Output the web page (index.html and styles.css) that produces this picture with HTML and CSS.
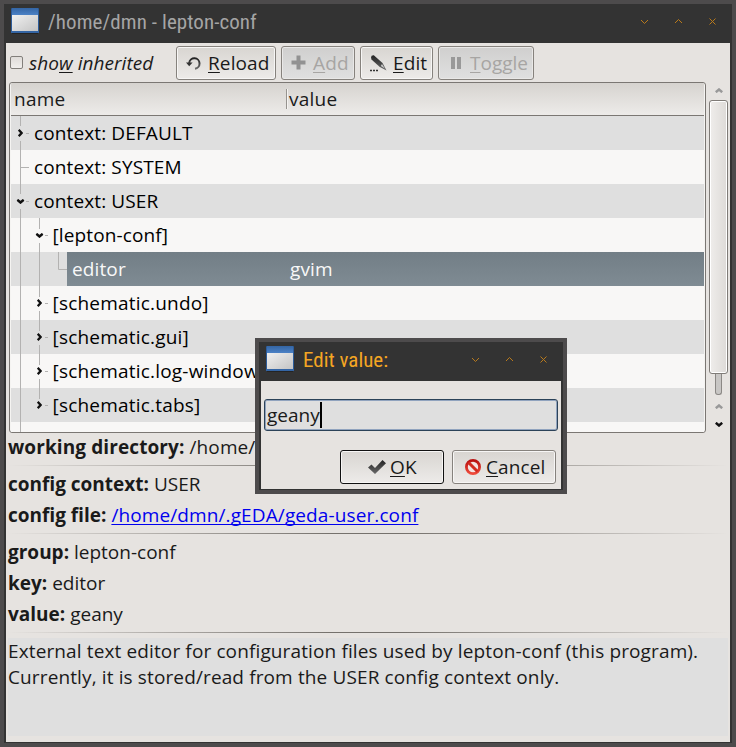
FILE: index.html
```html
<!DOCTYPE html>
<html lang="en">
<head>
<meta charset="utf-8">
<title>/home/dmn - lepton-conf</title>
<link rel="stylesheet" href="styles.css">
</head>
<body>
<svg class="defs" aria-hidden="true">
  <defs>
    <linearGradient id="blue" x1="0" y1="0" x2="0" y2="1"><stop offset="0" stop-color="#3465a4"/><stop offset="1" stop-color="#4c82c6"/></linearGradient>
    <linearGradient id="pane" x1="0" y1="0" x2="1" y2="1"><stop offset="0" stop-color="#f0f0f0"/><stop offset="1" stop-color="#c4c4c4"/></linearGradient>
    <linearGradient id="dark" x1="0" y1="0" x2="0" y2="1"><stop offset="0" stop-color="#222"/><stop offset="1" stop-color="#6a6a6a"/></linearGradient>
    <linearGradient id="red" x1="0" y1="0" x2="0" y2="1"><stop offset="0" stop-color="#b81010"/><stop offset="1" stop-color="#ee4a3a"/></linearGradient>
    <symbol id="app" viewBox="0 0 28 26">
      <rect y="0" width="28" height="25" rx="1" fill="#2d5c99"/>
      <rect x="1" y="0" width="26" height="7" fill="url(#blue)"/>
      <rect x="1" y="7" width="26" height="16" fill="url(#pane)"/>
      <rect x="0" y="23" width="28" height="2" fill="#3465a4"/>
      <rect x="1" y="25" width="26" height="1" fill="#242424"/>
    </symbol>
    <symbol id="min" viewBox="0 0 7 7"><path d="M0 2l3.5 3.5L7 2" fill="none" stroke="currentColor"/></symbol>
    <symbol id="max" viewBox="0 0 7 7"><path d="M0 5l3.5-3.5L7 5" fill="none" stroke="currentColor"/></symbol>
    <symbol id="close" viewBox="0 0 7 7"><path d="M.5.5l6 6m0-6l-6 6" fill="none" stroke="currentColor"/></symbol>
    <symbol id="right" viewBox="0 0 5 8"><path d="M.7.8L3.6 4 .7 7.2" fill="none" stroke="#111" stroke-width="2.3"/></symbol>
    <symbol id="down" viewBox="0 0 8 5"><path d="M.8.8L4 3.5 7.2.8" fill="none" stroke="currentColor" stroke-width="2.5"/></symbol>
  </defs>
</svg>

<div class="window">
  <div class="titlebar">
    <svg class="app-icon"><use href="#app"/></svg>
    <span class="title">/home/dmn - lepton-conf</span>
    <div class="controls">
      <svg><use href="#min"/></svg><svg><use href="#max"/></svg><svg><use href="#close"/></svg>
    </div>
  </div>

  <div class="content">
    <div class="toolbar">
      <span class="checkbox"></span>
      <span class="check-label">sho<u>w</u> inherited</span>
      <div class="button reload">
        <svg class="i-reload" viewBox="0 0 16 16"><path d="M3.2 9.5V7.8A5.2 5.2 0 1 1 9 13.7" fill="none" stroke="url(#dark)" stroke-width="2"/><path d="M0 7.5h6.6L3.2 11.2z" fill="#333"/></svg>
        <span><u>R</u>eload</span>
      </div>
      <div class="button add disabled">
        <svg class="i-add" viewBox="0 0 15 15"><path d="M5.5 0.5h4v5h5v4h-5v5h-4v-5h-5v-4h5z" fill="#929292"/></svg>
        <span><u>A</u>dd</span>
      </div>
      <div class="button edit">
        <svg class="i-edit" viewBox="0 0 17 18"><path d="M1 3.5Q1 1.2 3.8 1.3L12.5 9 16.5 16.5 9.5 12.8 1.5 5.5z" fill="url(#dark)"/><path d="M12 10l2.8 4.5L10.8 12z" fill="#ccc"/><path d="M0 16.5h2m1 0h2m1 0h2" stroke="#333" stroke-width="1.5"/></svg>
        <span><u>E</u>dit</span>
      </div>
      <div class="button toggle disabled">
        <svg class="i-pause" viewBox="0 0 11 12"><path d="M0 0h4v12H0zM6 0h4v12H6z" fill="#999"/></svg>
        <span><u>T</u>oggle</span>
      </div>
    </div>

    <div class="browser">
      <div class="tree">
        <div class="header"><span class="col-name">name</span><span class="col-value">value</span></div>
        <div class="rows">
          <div class="row"><svg class="guide l0"><path class="line" d="M9.5 0v10M9.5 25v9M15 17.5h3"/><use href="#right" x="7" y="13" width="5" height="8"/></svg><span>context: DEFAULT</span></div>
          <div class="row"><svg class="guide l0"><path class="line" d="M9.5 0v34M10 17.5h8"/></svg><span>context: SYSTEM</span></div>
          <div class="row"><svg class="guide l0"><path class="line" d="M9.5 0v10M9.5 25v9M15 17.5h3"/><use href="#down" x="5.5" y="15" width="8" height="5"/></svg><span>context: USER</span></div>
          <div class="row"><svg class="guide l1"><path class="line" d="M9.5 0v34M28.5 0v11M28.5 25v9M34 17.5h3"/><use href="#down" x="24.5" y="15" width="8" height="5"/></svg><span>[lepton-conf]</span></div>
          <div class="row"><svg class="guide l2"><path class="line" d="M9.5 0v34M28.5 0v34M47.5 0v17.5h8.5"/></svg><div class="selected"><span class="sel-name">editor</span><span>gvim</span></div></div>
          <div class="row wide"><svg class="guide l1"><path class="line" d="M9.5 0v34M28.5 0v11M28.5 25v9M34 17.5h3"/><use href="#right" x="26" y="13" width="5" height="8"/></svg><span>[schematic.undo]</span></div>
          <div class="row wide"><svg class="guide l1"><path class="line" d="M9.5 0v34M28.5 0v11M28.5 25v9M34 17.5h3"/><use href="#right" x="26" y="13" width="5" height="8"/></svg><span>[schematic.gui]</span></div>
          <div class="row wide"><svg class="guide l1"><path class="line" d="M9.5 0v34M28.5 0v11M28.5 25v9M34 17.5h3"/><use href="#right" x="26" y="13" width="5" height="8"/></svg><span>[schematic.log-window</span></div>
          <div class="row wide"><svg class="guide l1"><path class="line" d="M9.5 0v34M28.5 0v11M34 17.5h3"/><use href="#right" x="26" y="13" width="5" height="8"/></svg><span>[schematic.tabs]</span></div>
          <div class="row"><svg class="guide l0"><path class="line" d="M9.5 0v34"/></svg></div>
        </div>
      </div>
      <div class="scrollbar">
        <svg class="arrow up"><use href="#down"/></svg>
        <div class="slider"></div>
        <div class="trough"></div>
        <svg class="arrow up second"><use href="#down"/></svg>
        <svg class="arrow end"><use href="#down"/></svg>
      </div>
    </div>

    <div class="info">
      <div class="field spaced"><b>working directory:</b> /home/</div>
      <div class="rule"></div>
      <div class="field"><b>config context:</b> USER</div>
      <div class="field next"><b>config file:</b> <a class="link">/home/dmn/.gEDA/geda-user.conf</a></div>
      <div class="rule"></div>
      <div class="field"><b>group:</b> lepton-conf</div>
      <div class="field next"><b>key:</b> editor</div>
      <div class="field next"><b>value:</b> geany</div>
      <div class="rule"></div>
      <div class="description">External text editor for configuration files used by lepton-conf (this program).<br>Currently, it is stored/read from the USER config context only.</div>
    </div>
  </div>
</div>

<div class="dialog">
  <div class="titlebar">
    <svg class="app-icon"><use href="#app"/></svg>
    <span class="title">Edit value:</span>
    <div class="controls">
      <svg><use href="#min"/></svg><svg><use href="#max"/></svg><svg><use href="#close"/></svg>
    </div>
  </div>
  <div class="dialog-body">
    <div class="entry"><span>geany</span><i class="caret"></i></div>
    <div class="actions">
      <div class="button ok">
        <svg class="i-ok" viewBox="0 0 18 14"><path d="M0 7.5L3.5 4.5 7 8 14.5 0 18 3.2 7 14z" fill="url(#dark)"/></svg>
        <span><u>O</u>K</span>
      </div>
      <div class="button cancel">
        <svg class="i-cancel" viewBox="0 0 16 16"><circle cx="8" cy="8" r="6.6" fill="#f3e3e1" stroke="url(#red)" stroke-width="2.8"/><path d="M3.5 3.5l9 9" stroke="#d32a20" stroke-width="3"/></svg>
        <span><u>C</u>ancel</span>
      </div>
    </div>
  </div>
</div>
</body>
</html>
```
FILE: styles.css
```css
* { box-sizing: border-box; }
body {
  margin: 0;
  width: 736px;
  height: 747px;
  position: relative;
  overflow: hidden;
  font: 19px/26px "Open Sans", sans-serif;
  color: #1a1a1a;
  white-space: nowrap;
}
svg { display: block; flex: none; overflow: visible; }
.defs { position: absolute; width: 0; height: 0; }
u { text-decoration-thickness: 1px; text-underline-offset: 2px; text-decoration-skip-ink: none; }

.window, .dialog { border: 4px solid #4d4b4c; background: #333; display: flex; flex-direction: column; }
.window { width: 736px; height: 747px; padding: 0 2px 1px; }
.titlebar { height: 39px; display: flex; align-items: center; padding: 0 14px 0 5px; flex: none; }
.app-icon { width: 28px; height: 26px; margin-top: -6px; }
.title {
  font-family: "Roboto Condensed", Roboto, sans-serif;
  font-stretch: 75%;
  font-size: 21px;
  letter-spacing: .07px;
  color: #a5a5a5;
  margin: -3px 0 0 9px;
}
.controls { margin: -4px 0 0 auto; display: flex; gap: 27px; color: #b97a1c; }
.controls svg { width: 7px; height: 7px; }

.content { flex: 1; background: #e6e3e0; display: flex; flex-direction: column; }
.toolbar { height: 39px; display: flex; align-items: center; padding: 0 0 0 4px; flex: none; }
.checkbox { width: 13px; height: 13px; border: 1px solid #827f7b; border-radius: 2px; background: linear-gradient(#dfdcd9, #f0eeec); }
.check-label { font-style: italic; letter-spacing: .05px; margin: 1px 0 0 6px; width: 147px; }
.button {
  height: 34px;
  border: 1px solid #86827d;
  border-radius: 3px;
  background: linear-gradient(#d8d5d1, #edebe9);
  box-shadow: inset 0 0 0 1px #f7f6f5;
  display: flex;
  align-items: center;
  padding-left: 9px;
  margin-right: 5px;
}
.button span { margin-left: 6px; letter-spacing: .12px; }
.disabled { color: #a7a5a3; background: linear-gradient(#d0cfce, #e0e0e0); box-shadow: inset 0 0 0 1px #e9e8e7; }
.reload { width: 100px; }
.add { width: 74px; }
.edit { width: 73px; }
.toggle { width: 96px; padding-left: 12px; }
.toggle span { margin-left: 8px; letter-spacing: 0; }
.i-reload { width: 16px; height: 16px; }
.i-add { width: 15px; height: 15px; }
.i-add + span { margin-left: 7px; }
.i-edit { width: 17px; height: 18px; }
.i-pause { width: 11px; height: 12px; }

.browser { height: 351px; display: flex; padding-left: 3px; flex: none; }
.tree { width: 697px; border: 1px solid #7b7773; border-radius: 3px; padding: 0 1px; background: #f5f4f2; display: flex; flex-direction: column; color: #000; }
.header { height: 33px; border-bottom: 1px solid #7b7773; background: linear-gradient(#d6d3cf, #edebe9); display: flex; align-items: center; padding-left: 3px; flex: none; color: #1a1a1a; letter-spacing: .25px; }
.col-name { width: 272px; }
.col-value { border-left: 1px solid #96938f; height: 20px; line-height: 20px; padding-left: 2px; box-shadow: inset 1px 0 #f5f3f1; }
.rows { flex: 1; overflow: hidden; letter-spacing: .12px; }
.row { height: 34px; display: flex; align-items: center; background: #f8f7f6; }
.row:nth-child(odd) { background: #dfdfdf; }
.wide { letter-spacing: .2px; }
.guide { height: 34px; color: #111; }
.line { stroke: #b3b2b1; fill: none; }
.l0 { width: 23px; }
.l1 { width: 41.5px; }
.l2 { width: 56px; }
.selected { flex: 1; height: 34px; display: flex; align-items: center; padding-left: 5px; color: #f8f8f8; background: linear-gradient(#727e86, #7f8b93); }
.sel-name { width: 218px; }

.scrollbar { width: 19px; margin-left: 3px; display: flex; flex-direction: column; align-items: center; }
.arrow { width: 8px; height: 5px; color: #111; }
.up { transform: rotate(180deg); color: #999; margin: 6px 0 7px; }
.slider { width: 19px; height: 274px; border: 1px solid #7f7b77; border-radius: 3px; background: linear-gradient(90deg, #efedeb, #dddad7); box-shadow: inset 0 0 0 1px #fff; }
.trough { width: 7px; height: 21px; border: 1px solid #8b8885; border-top: 0; border-radius: 0 0 3px 3px; background: #c8c6c4; }
.second { margin: 9px 0 13px; }

.info { padding: 1px 2px 0; flex: 1; }
.field { height: 26px; }
.spaced { letter-spacing: .1px; }
.next { margin-top: 5px; }
b { font-weight: 700; }
.link { color: #0000ee; letter-spacing: .11px; text-decoration: underline; text-decoration-thickness: 1px; text-underline-offset: 2px; text-decoration-skip-ink: none; }
.rule { height: 1px; margin: 5px 0; background: linear-gradient(90deg, transparent, #75716c 45%, #75716c 55%, transparent); }
.description { height: 98px; background: #dfdfdf; letter-spacing: .125px; }

.dialog { position: absolute; left: 255px; top: 338px; width: 312px; height: 156px; padding: 0 2px 1px; }
.dialog .title { color: #f5a623; letter-spacing: 0; }
.dialog-body { flex: 1; background: #e6e3e0; padding: 18px 3px 0; color: #1a1a1a; }
.entry { height: 32px; width: 294px; border: 1px solid #2c4258; border-radius: 3px; background: #dfdfdf; box-shadow: inset 0 0 0 1px #90a3be; display: flex; align-items: center; padding-left: 2px; }
.caret { width: 2px; height: 26px; background: #000; }
.actions { display: flex; justify-content: flex-end; gap: 8px; padding: 19px 2px 0 0; }
.actions .button { width: 104px; margin: 0; }
.ok { padding-left: 27px; border-color: #111; }
.ok span { margin-left: 4px; }
.cancel { padding-left: 12px; }
.cancel span { margin-left: 5px; }
.i-ok { width: 18px; height: 14px; }
.i-cancel { width: 16px; height: 16px; }
```
